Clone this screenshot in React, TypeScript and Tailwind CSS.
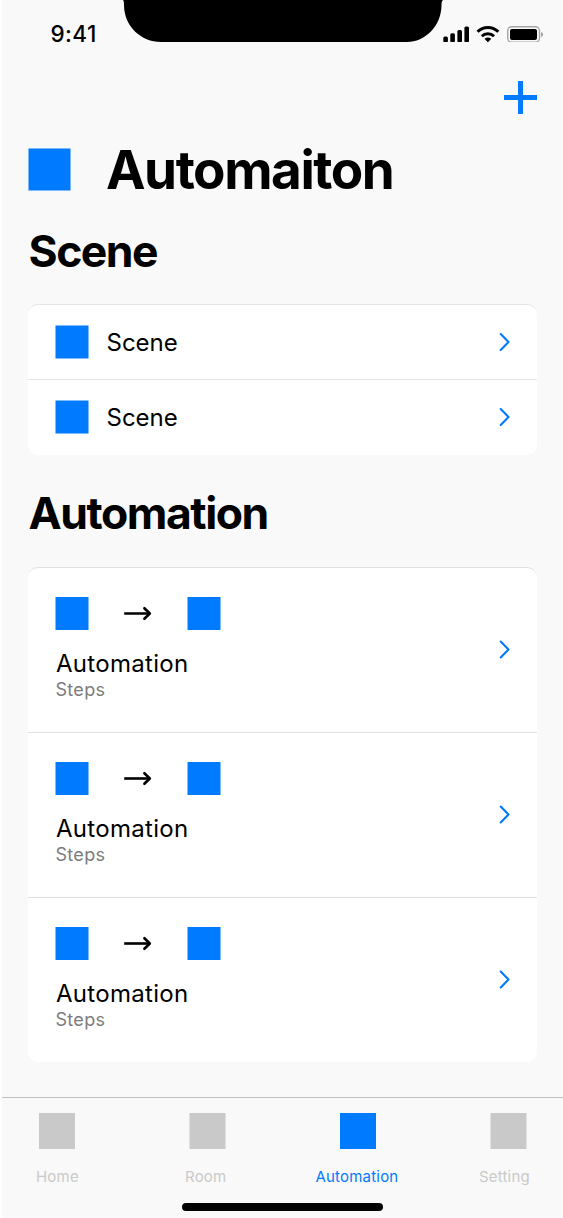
import React from "react";

function Square({ size, className, dx = 0, dy = 0 }: { size: number; className: string; dx?: number; dy?: number }) {
  return (
    <svg width={size + 1} height={size + 1} className={`block shrink-0 ${className}`} aria-hidden>
      <rect x={dx} y={dy} width={size} height={size} fill="currentColor" />
    </svg>
  );
}

function Chevron({ className = "", y = 0 }: { className?: string; y?: number }) {
  return (
    <svg width="14" height="22" viewBox={`0 ${y} 14 22`} className={`block shrink-0 text-[#007aff] ${className}`} fill="none" stroke="currentColor" strokeWidth="2.1" strokeLinecap="round" strokeLinejoin="round" aria-hidden>
      <path d="M2.7 3 L10.5 11 L2.7 19" />
    </svg>
  );
}

function Arrow() {
  return (
    <svg width="30" height="16" viewBox="0 0 30 16" className="block shrink-0" fill="none" stroke="black" strokeWidth="2.6" aria-hidden>
      <path d="M1.2 7.5 H27" />
      <path d="M21.4 2.2 L26.8 7.5 L21.4 12.8" strokeLinecap="round" strokeLinejoin="round" />
    </svg>
  );
}

function StatusBar() {
  return (
    <header className="flex h-[42px] shrink-0 items-start justify-between">
      <div className="w-[121px] pl-[48.5px] pt-[20px] text-[22.5px] font-medium leading-[27px] tracking-[0.4px]">9:41</div>
      <svg width="320" height="42" viewBox="0 0 320 42" className="block shrink-0" aria-hidden>
        <path d="M0 0 H320 C319 1 318.5 2 318.5 5 C318.5 26 302 42 284 42 H38 C18 42 1 26 1 5 C1 2 0.8 1 0 0 Z" />
      </svg>
      <svg width="120" height="42" viewBox="443 0 120 42" className="block shrink-0" aria-hidden>
        <rect x="443.3" y="36.5" width="4.6" height="6" rx="1.5" />
        <rect x="450.3" y="33.3" width="4.6" height="9.2" rx="1.5" />
        <rect x="457.4" y="30" width="4.6" height="12.5" rx="1.5" />
        <rect x="464.4" y="26.5" width="4.6" height="16" rx="1.5" />
        <path d="M477.5 31.8 A14.6 14.6 0 0 1 498.3 31.8 M481.8 36.3 A8.6 8.6 0 0 1 494 36.3" fill="none" stroke="black" strokeWidth="3" />
        <path d="M484.5 38.8 Q487.9 36.2 491.3 38.8 L487.9 42.3 Z" />
        <rect x="507.7" y="26.7" width="31.8" height="15.6" rx="4" fill="none" stroke="#a5a5a5" strokeWidth="1.4" />
        <rect x="510" y="29" width="27" height="11" rx="2" />
        <path d="M541 32 Q543.2 32.8 543.2 34.5 Q543.2 36.2 541 37 Z" fill="#a5a5a5" />
      </svg>
    </header>
  );
}

function SceneRow() {
  return (
    <div className="flex h-[75px] items-center border-t border-[#e5e5e5] pl-[27px] pr-[25px] first:border-transparent">
      <Square size={33} dx={0.5} dy={0.5} className="text-[#007aff]" />
      <span className="ml-[17.5px] grow pt-[2px] text-[24px] leading-[30px]">Scene</span>
      <Chevron />
    </div>
  );
}

function AutomationRow() {
  return (
    <div className="flex h-[165px] items-center border-t border-[#e0e0e0] pl-[27px] pr-[25px] first:border-transparent">
      <div className="flex h-full grow flex-col pt-[29px]">
        <div className="flex h-[34px]">
          <Square size={33} dx={0.5} className="text-[#007aff]" />
          <div className="flex w-[98px] items-center pb-px pl-[34px]">
            <Arrow />
          </div>
          <Square size={33} dx={0.5} className="text-[#007aff]" />
        </div>
        <div className="mt-[18px] pl-px text-[24px] leading-[30px] tracking-[0.3px]">Automation</div>
        <div className="pl-[0.5px] text-[18px] leading-[22px] tracking-[0.3px] text-[#7c7c7c]">Steps</div>
      </div>
      <Chevron y={0.5} className="mb-px" />
    </div>
  );
}

const tabs = [
  { label: "Home", dx: 0, color: "text-[#c9c9c9]", width: "w-[111px]", pad: "pl-[37px]", text: "pl-[34px]" },
  { label: "Room", dx: 0.5, color: "text-[#c9c9c9]", width: "w-[150px]", pad: "pl-[76px]", text: "pl-[72px]" },
  { label: "Automation", dx: 0, color: "text-[#007aff]", width: "w-[150px]", pad: "pl-[77px]", text: "pl-[52.5px]" },
  { label: "Setting", dx: 0.5, color: "text-[#c9c9c9]", width: "w-[150px]", pad: "pl-[77px]", text: "pl-[66px]" },
];

export default function App() {
  return (
    <div className="h-[1218px] w-[563px] overflow-hidden bg-white pl-[2px] font-['Inter',sans-serif] text-black">
      <div className="flex h-full flex-col bg-[#f9f9f9]">
        <StatusBar />
        <div className="flex h-[106px] shrink-0 justify-end pr-[26px] pt-[39px]">
          <svg width="33" height="33" viewBox="0 0 33 33" className="block" aria-hidden>
            <path d="M0 16.5 H33 M16.5 0 V33" stroke="#007aff" strokeWidth="5" />
          </svg>
        </div>
        <div className="flex h-[43px] shrink-0 items-center pl-[26px]">
          <Square size={42} dx={0.5} dy={0.5} className="text-[#007aff]" />
          <h1 className="ml-[35px] text-[53px] font-bold leading-[64px] tracking-[-1.45px]">Automaiton</h1>
        </div>
        <h2 className="mt-[33px] h-[54px] shrink-0 pl-[26.5px] text-[44.5px] font-bold leading-[54px] tracking-[-1.5px]">Scene</h2>
        <section className="ml-[26px] mr-[26px] mt-[26px] h-[151px] shrink-0 overflow-hidden rounded-[10px] border-t border-[#e5e5e5] bg-white">
          <div className="-mt-px">
            <SceneRow />
            <SceneRow />
          </div>
        </section>
        <h2 className="mt-[31px] h-[55px] shrink-0 pl-[26.5px] text-[44.5px] font-bold leading-[54px] tracking-[-1.45px]">Automation</h2>
        <section className="ml-[26px] mr-[26px] mt-[26px] h-[495px] shrink-0 overflow-hidden rounded-[10px] border-t border-[#e0e0e0] bg-white">
          <div className="-mt-px">
            <AutomationRow />
            <AutomationRow />
            <AutomationRow />
          </div>
        </section>
        <nav className="mt-[35px] flex h-[121px] shrink-0 flex-col border-t border-[#c1c1c1]">
          <div className="flex pt-[15px]">
            {tabs.map((t) => (
              <div key={t.label} className={`${t.width} ${t.color} shrink-0`}>
                <div className={t.pad}>
                  <Square size={36} dx={t.dx} className="" />
                </div>
                <div className={`${t.text} mt-[17px] whitespace-nowrap text-[15px] leading-[20px] tracking-[0.2px]`}>{t.label}</div>
              </div>
            ))}
          </div>
          <div className="ml-[180px] mt-[16px] h-[7.5px] w-[201px] rounded-full bg-black" />
        </nav>
      </div>
    </div>
  );
}
